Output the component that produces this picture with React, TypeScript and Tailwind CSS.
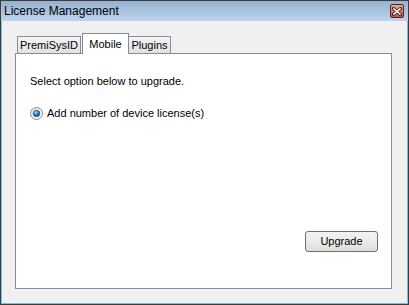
import React from "react";

function CloseBtn() {
  return (
    <div className="w-[14px] h-[14px] rounded-[2px] border border-[#4a2420] bg-gradient-to-b from-[#e8a898] via-[#d67a6a] to-[#c2584a] flex items-center justify-center">
      <svg width="10" height="9" viewBox="0 0 10 9">
        <path d="M1.5 1.5 L8.5 7.5 M8.5 1.5 L1.5 7.5" stroke="#3a2020" strokeWidth="3" strokeLinecap="square" />
        <path d="M2 2 L8 7 M8 2 L2 7" stroke="#ffffff" strokeWidth="1.6" strokeLinecap="square" />
      </svg>
    </div>
  );
}

function Radio() {
  return (
    <svg width="13" height="13" viewBox="0 0 13 13">
      <defs>
        <radialGradient id="dot" cx="0.4" cy="0.35" r="0.7">
          <stop offset="0" stopColor="#b8e0f8" />
          <stop offset="0.45" stopColor="#3f7fc0" />
          <stop offset="1" stopColor="#0f3f78" />
        </radialGradient>
        <linearGradient id="ring" x1="0" y1="0" x2="1" y2="1">
          <stop offset="0" stopColor="#e4e4e4" />
          <stop offset="1" stopColor="#ffffff" />
        </linearGradient>
      </defs>
      <circle cx="6.5" cy="6.5" r="6" fill="url(#ring)" stroke="#8a8a8a" strokeWidth="1" />
      <circle cx="6.5" cy="6.5" r="3.3" fill="url(#dot)" stroke="#1d4f86" strokeWidth="0.6" />
    </svg>
  );
}

export default function App() {
  return (
    <div
      className="w-[409px] h-[305px] bg-[#3c3c3c] p-px flex flex-col text-black"
      style={{ fontFamily: '"Liberation Sans", Arial, sans-serif' }}
    >
      <div className="h-[20px] flex items-center justify-between pl-[3px] pr-[4px] bg-gradient-to-b from-[#97b1ce] to-[#bcd4ec]">
        <span className="text-[12px] leading-none">License Management</span>
        <CloseBtn />
      </div>
      <div className="flex-1 bg-[#f0f0f0] border-x border-b border-[#7fbbdc] pt-[12px] pl-[13px] pr-[15px] pb-[14px] flex flex-col text-[11px]">
        <div className="h-[20px] flex items-end pl-[2px]">
          <div className="w-[64px] h-[17px] border border-b-0 border-[#898c95] bg-gradient-to-b from-[#f4f4f4] to-[#e1e1e1] flex items-center justify-center leading-none">
            PremiSysID
          </div>
          <div className="relative z-10 -mb-px ml-px w-[47px] h-[21px] border border-b-0 border-[#898c95] bg-white flex items-start pt-[5px] justify-center leading-none">
            Mobile
          </div>
          <div className="w-[42px] h-[17px] border border-b-0 border-l-0 border-[#898c95] bg-gradient-to-b from-[#f4f4f4] to-[#e1e1e1] flex items-center justify-center leading-none">
            Plugins
          </div>
        </div>
        <div className="flex-1 border border-[#898c95] bg-white flex flex-col pl-[14px] pt-[21px]">
          <div className="leading-[13px]">Select option below to upgrade.</div>
          <div className="mt-[19px] flex items-center gap-[4px] leading-[13px]">
            <Radio />
            <span>Add number of device license(s)</span>
          </div>
          <button className="mt-auto self-end mr-[13px] mb-[36px] w-[73px] h-[21px] rounded-[3px] border border-[#707070] bg-gradient-to-b from-[#f2f2f2] via-[#ebebeb] to-[#dcdcdc] text-[11px] leading-none">
            Upgrade
          </button>
        </div>
      </div>
    </div>
  );
}
